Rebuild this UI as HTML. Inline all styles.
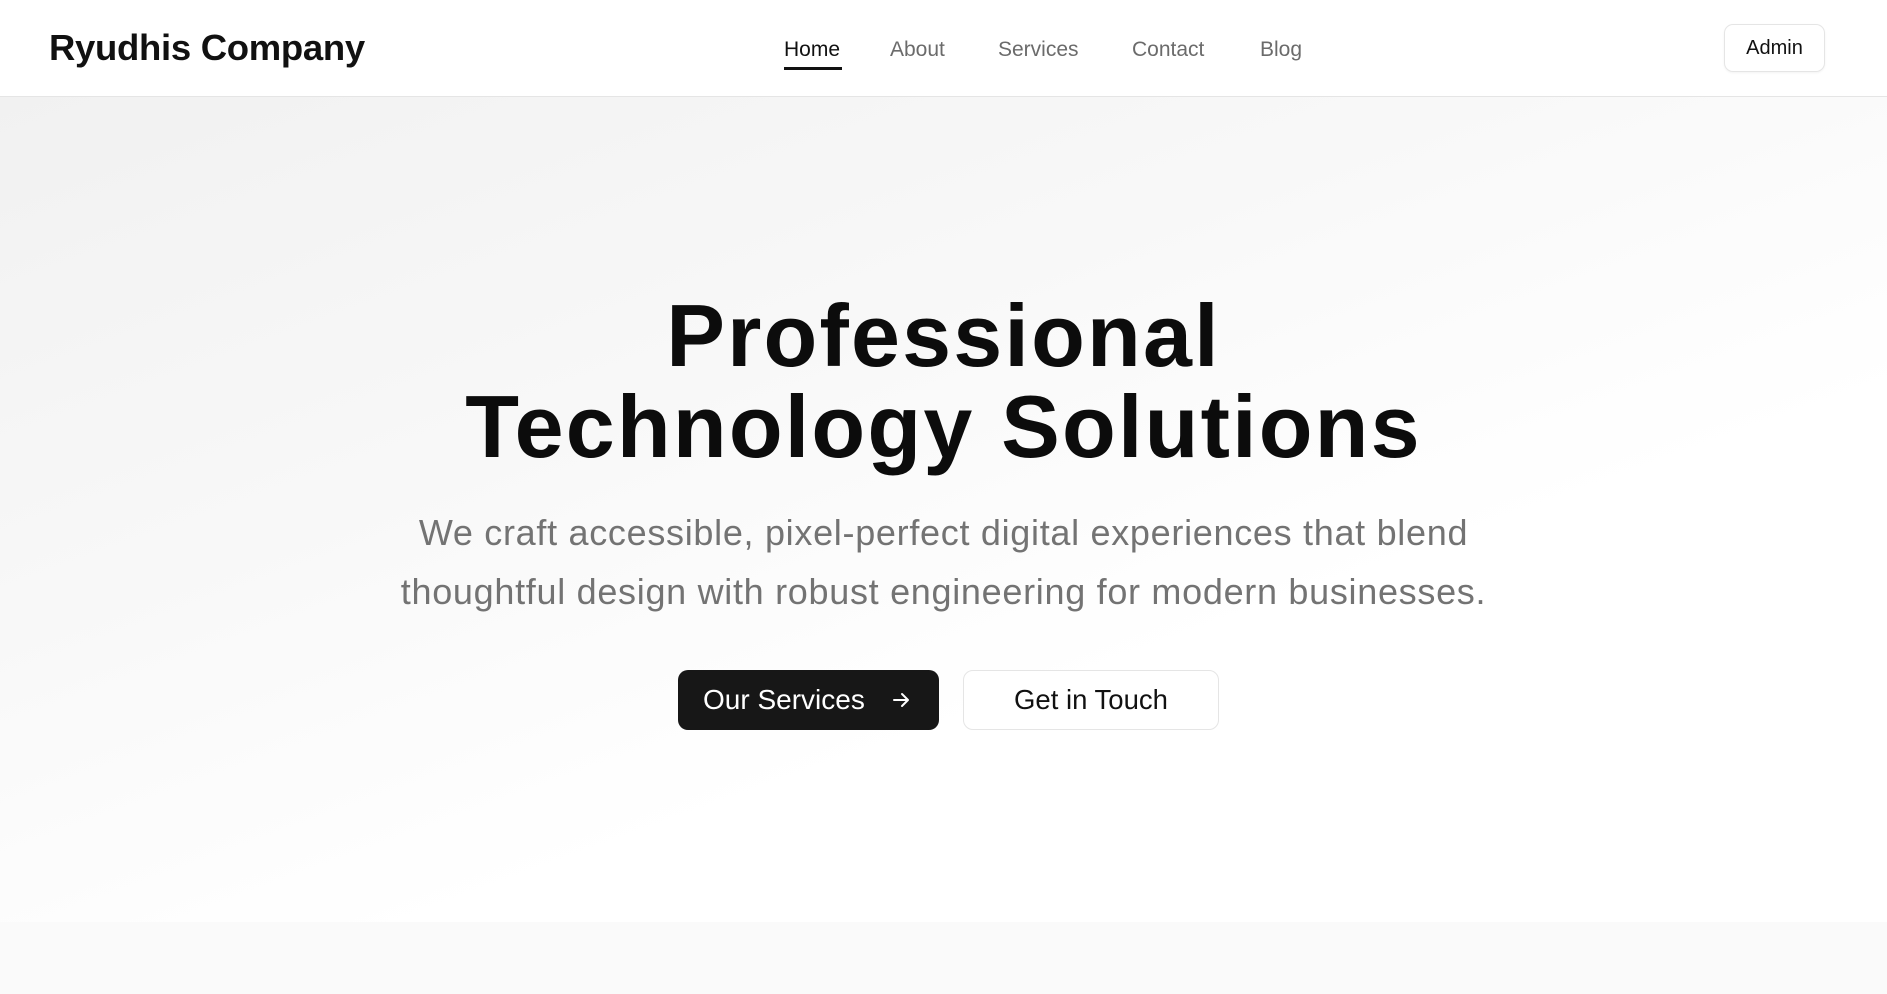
<!DOCTYPE html>
<html><head><meta charset="utf-8"><style>
*{margin:0;padding:0;box-sizing:border-box}
body{width:1887px;height:994px;overflow:hidden;font-family:"Liberation Sans",sans-serif;background:#fff;position:relative}
header{position:absolute;left:0;top:0;width:1887px;height:97px;border-bottom:1px solid #e5e5e5;background:#fff}
.logo{position:absolute;left:49px;top:27px;font-size:36.5px;font-weight:700;color:#111;letter-spacing:-0.3px}
.nav a{position:absolute;top:38px;font-size:21px;color:#6b6b6b;text-decoration:none}
.nav a.act{color:#111}
.ul{position:absolute;left:784px;top:67px;width:58px;height:3px;background:#111}
.admin{position:absolute;left:1724px;top:24px;width:101px;height:48px;border:1px solid #e5e5e5;border-radius:9px;font-size:20px;color:#111;text-align:center;line-height:46px;box-shadow:0 1px 2px rgba(0,0,0,.05)}
.hero{position:absolute;left:0;top:97px;width:1887px;height:825px;background:linear-gradient(160deg,#f1f1f1 0%,#f8f8f8 35%,#fff 65%)}
.bottom{position:absolute;left:0;top:922px;width:1887px;height:72px;background:#fafafa}
h1{position:absolute;left:0;width:1887px;top:290px;text-align:center;font-size:88px;line-height:91px;font-weight:700;color:#0c0c0c;letter-spacing:2.2px}
p{position:absolute;left:0;width:1887px;top:503px;text-align:center;font-size:36px;line-height:59px;color:#737373;letter-spacing:0.7px}
.b1{position:absolute;left:678px;top:670px;width:261px;height:60px;background:#171717;border-radius:10px;color:#fff;font-size:28px;line-height:60px;padding-left:25px}
.b1 svg{position:absolute;left:214px;top:21px}
.b2{position:absolute;left:963px;top:670px;width:256px;height:60px;border:1px solid #e5e5e5;border-radius:10px;background:#fff;color:#111;font-size:27.5px;line-height:58px;text-align:center}
</style></head><body>
<div class="hero"></div>
<div class="bottom"></div>
<header>
<div class="logo">Ryudhis Company</div>
<div class="nav">
<a class="act" style="left:784px">Home</a>
<a style="left:890px">About</a>
<a style="left:998px">Services</a>
<a style="left:1132px">Contact</a>
<a style="left:1260px">Blog</a>
</div>
<div class="ul"></div>
<div class="admin">Admin</div>
</header>
<h1>Professional<br>Technology Solutions</h1>
<p>We craft accessible, pixel-perfect digital experiences that blend<br>thoughtful design with robust engineering for modern businesses.</p>
<div class="b1">Our Services<svg width="18" height="18" viewBox="0 0 18 18" fill="none" stroke="#fff" stroke-width="2" stroke-linecap="round" stroke-linejoin="round"><path d="M2 9h14M10 3l6 6-6 6"/></svg></div>
<div class="b2">Get in Touch</div>
</body></html>
